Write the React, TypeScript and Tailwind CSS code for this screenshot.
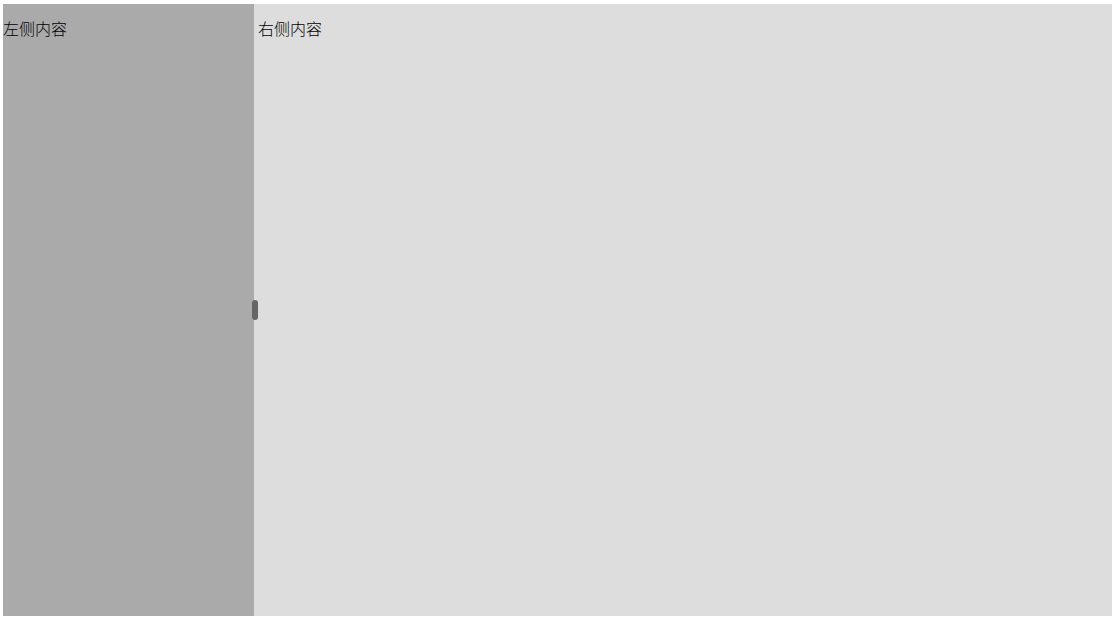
import React, { useRef, useState } from 'react';

const MIN_WIDTH = 80;

const App: React.FC = () => {
  const boxRef = useRef<HTMLDivElement>(null);
  const [leftWidth, setLeftWidth] = useState(251);
  const [dragging, setDragging] = useState(false);

  const resize = (width: number) => {
    const total = boxRef.current?.clientWidth ?? 0;
    setLeftWidth(Math.max(MIN_WIDTH, Math.min(width, total - MIN_WIDTH)));
  };

  const handleMove = (e: React.PointerEvent) => {
    if (!dragging || !boxRef.current) return;
    resize(e.clientX - boxRef.current.getBoundingClientRect().left);
  };

  const handleKey = (e: React.KeyboardEvent) => {
    if (e.key === 'ArrowLeft') resize(leftWidth - 10);
    if (e.key === 'ArrowRight') resize(leftWidth + 10);
  };

  return (
    <div className="h-screen bg-white py-1 pl-[3px] pr-1 text-base font-light leading-5 text-black font-['Liberation_Sans','Noto_Sans_CJK_SC',sans-serif]">
      <div ref={boxRef} className="flex h-full bg-[#ddd]">
        <aside className="shrink-0 overflow-hidden bg-[#aaa] pt-4" style={{ width: leftWidth }}>
          <p>左侧内容</p>
        </aside>

        {/* drag bar, the grip is a bit wider than the bar itself */}
        <div
          role="separator"
          aria-orientation="vertical"
          aria-valuenow={leftWidth}
          tabIndex={0}
          className="relative w-1 shrink-0 cursor-col-resize touch-none"
          onPointerDown={(e) => {
            e.currentTarget.setPointerCapture(e.pointerId);
            setDragging(true);
          }}
          onPointerMove={handleMove}
          onPointerUp={() => setDragging(false)}
          onKeyDown={handleKey}
        >
          <span className="absolute right-0 top-1/2 h-5 w-1.5 -translate-y-1/2 rounded-[3px] bg-[#666]" />
        </div>

        <main className="min-w-0 flex-1 overflow-hidden pt-4">
          <p>右侧内容</p>
        </main>
      </div>
    </div>
  );
};

export default App;
